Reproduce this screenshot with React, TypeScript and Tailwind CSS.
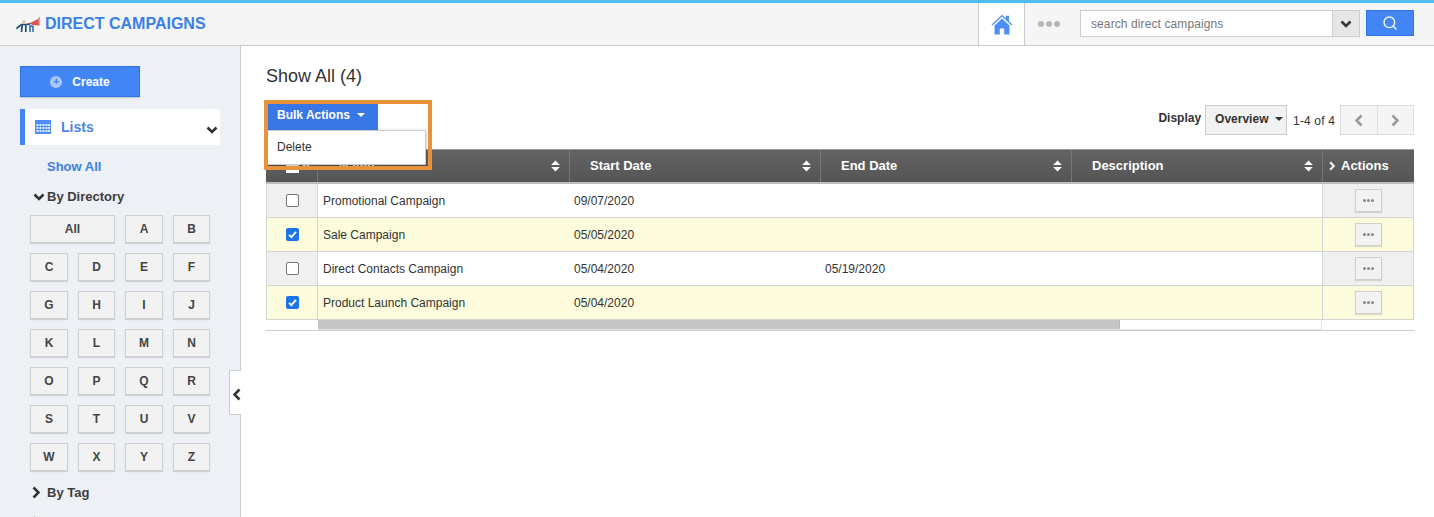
import React from 'react';
import { Search } from 'lucide-react';

const letterRows = [
  ['C', 'D', 'E', 'F'],
  ['G', 'H', 'I', 'J'],
  ['K', 'L', 'M', 'N'],
  ['O', 'P', 'Q', 'R'],
  ['S', 'T', 'U', 'V'],
  ['W', 'X', 'Y', 'Z'],
];

const campaigns = [
  { name: 'Promotional Campaign', start: '09/07/2020', end: '', checked: false },
  { name: 'Sale Campaign', start: '05/05/2020', end: '', checked: true },
  { name: 'Direct Contacts Campaign', start: '05/04/2020', end: '05/19/2020', checked: false },
  { name: 'Product Launch Campaign', start: '05/04/2020', end: '', checked: true },
];

const columns = [
  { label: 'Name', width: 'w-[252px]', pad: 'pl-[21px]' },
  { label: 'Start Date', width: 'w-[251px]', pad: 'pl-[20px]' },
  { label: 'End Date', width: 'w-[251px]', pad: 'pl-[20px]' },
  { label: 'Description', width: 'w-[251px]', pad: 'pl-[20px]' },
];

const chevronPaths = {
  down: 'M1.5 1.5 L6 6 L10.5 1.5',
  left: 'M6.5 1.5 L1.5 6.5 L6.5 11.5',
  right: 'M1.5 1.5 L6.5 6.5 L1.5 11.5',
};

const Chevron = ({ dir, color = '#333', className = '' }: { dir: 'down' | 'left' | 'right'; color?: string; className?: string }) => {
  const down = dir === 'down';
  return (
    <svg width={down ? 12 : 8} height={down ? 8 : 13} viewBox={down ? '0 0 12 8' : '0 0 8 13'} fill="none" className={`shrink-0 ${className}`}>
      <path d={chevronPaths[dir]} stroke={color} strokeWidth="2.6" />
    </svg>
  );
};

const Logo = () => (
  <svg width="24" height="15" viewBox="0 0 24 15">
    <path d="M13 6.5 L23 1.5 V8.5 L16.5 8 Z" fill="#e0524d" />
    <rect x="22.5" y="0" width="1.5" height="8.5" fill="#e89a96" />
    <circle cx="8" cy="4.6" r="1.7" fill="#e9c48c" />
    <path d="M0.5 11.5 L5.5 7.5 H10.5 L14 6.8" stroke="#1f4e79" strokeWidth="1.7" fill="none" />
    <path d="M5.5 15 L6.2 8 M9.8 15 L9.8 8" stroke="#1f4e79" strokeWidth="1.7" fill="none" />
    <path d="M14 15 V9 L17 9.5 V15" stroke="#2c6aa0" strokeWidth="1.5" fill="none" />
  </svg>
);

const HomeIcon = () => (
  <svg width="22" height="21" viewBox="0 0 22 21">
    <path d="M0.5 10.5 L11 0.8 L15 4.5 V1.8 H18 V7.2 L21.5 10.5 L20.6 11.4 L11 2.6 L1.4 11.4 Z" fill="#4d8ff7" />
    <path d="M3.5 11.5 L11 4.6 L18.5 11.5 V20.5 H13.2 V14.5 H8.8 V20.5 H3.5 Z" fill="#4d8ff7" />
  </svg>
);

const CalendarIcon = () => (
  <svg width="16" height="14" viewBox="0 0 16 14">
    <rect width="16" height="14" fill="#4d8ff7" />
    <g fill="#dfe9fb">
      {[4, 7, 10].map((y) =>
        [1.5, 4.5, 7.5, 10.5, 13].map((x) => <rect key={`${x}-${y}`} x={x} y={y} width="2" height="2" />),
      )}
    </g>
  </svg>
);

const SortIcon = () => (
  <svg width="9" height="12" viewBox="0 0 9 12" fill="#fff">
    <path d="M4.5 0.5 L8.8 5 H0.2 Z" />
    <path d="M0.2 7 H8.8 L4.5 11.5 Z" />
  </svg>
);

const Caret = ({ color }: { color: string }) => (
  <svg width="8" height="4" viewBox="0 0 8 4" fill={color}>
    <path d="M0 0 H8 L4 4 Z" />
  </svg>
);

const MoreDots = ({ color, size, gap }: { color: string; size: number; gap: string }) => (
  <span className={`flex items-center ${gap}`}>
    {[0, 1, 2].map((i) => (
      <span key={i} className="rounded-full" style={{ width: size, height: size, backgroundColor: color }} />
    ))}
  </span>
);

const LetterButton = ({ label, className }: { label: string; className: string }) => (
  <button className={`flex h-[28px] items-center justify-center border border-[#cfcfcf] bg-[#f2f2f2] pb-[1px] text-[12px] font-bold text-[#444] shadow-[0_1px_1px_rgba(0,0,0,0.12)] ${className}`}>
    {label}
  </button>
);

const Checkbox = ({ checked }: { checked: boolean }) =>
  checked ? (
    <span className="flex h-[13px] w-[13px] items-center justify-center rounded-[2px] bg-[#1a73e8]">
      <svg width="11" height="11" viewBox="0 0 11 11" fill="none">
        <path d="M2 5.8 L4.4 8.2 L9 2.8" stroke="#fff" strokeWidth="1.9" />
      </svg>
    </span>
  ) : (
    <span className="h-[13px] w-[13px] rounded-[2px] border border-[#767676] bg-white" />
  );

function Sidebar() {
  return (
    <aside className="relative w-[241px] shrink-0 border-r border-[#cccccc] bg-[#edf0f5]">
      <div className="flex flex-col pl-5 pt-[20px]">
        <button className="flex h-[31px] w-[120px] items-center justify-center gap-[10px] border border-[#2f74e8] bg-[#4285f4] text-[12px] font-bold text-white shadow-[0_1px_1px_rgba(0,0,0,0.15)]">
          <span className="flex h-[12px] w-[12px] items-center justify-center rounded-full bg-[#a9c8f9] text-[11px] leading-none text-[#4285f4]">+</span>
          Create
        </button>
        <div className="mt-3 flex h-[36px] w-[200px] border-l-[5px] border-[#4285f4] bg-white pl-[10px]">
          <div className="flex h-full flex-1 items-center gap-[10px]">
            <CalendarIcon />
            <span className="text-[14px] font-bold text-[#4a86e8]">Lists</span>
          </div>
          <Chevron dir="down" className="mr-[2px] mt-[17px]" />
        </div>
        <a className="ml-[27px] mt-[14px] text-[13px] leading-[15px] font-bold text-[#3b7fe8]">Show All</a>
        <div className="ml-[13px] mt-[15px] flex items-center gap-[2px] text-[13px] leading-[15px] font-bold text-[#3d3d3d]">
          <Chevron dir="down" />
          By Directory
        </div>
        <div className="ml-[10px] mt-[11px] flex flex-col gap-[10px]">
          <div className="flex gap-[10px]">
            <LetterButton label="All" className="w-[85px]" />
            <LetterButton label="A" className="w-[38px]" />
            <LetterButton label="B" className="w-[37px]" />
          </div>
          {letterRows.map((row) => (
            <div key={row[0]} className="flex gap-[10px]">
              {row.map((letter, i) => (
                <LetterButton key={letter} label={letter} className={i % 2 === 0 ? 'w-[38px]' : 'w-[37px]'} />
              ))}
            </div>
          ))}
        </div>
        <div className="ml-[12px] mt-[14px] flex items-center gap-[7px] text-[13px] leading-[15px] font-bold text-[#3d3d3d]">
          <Chevron dir="right" />
          By Tag
        </div>
        <Chevron dir="right" className="ml-[12px] mt-[16px]" />
      </div>
      <button className="absolute right-[-1px] top-[324px] flex h-[45px] w-[12px] items-center justify-end border border-r-0 border-[#cccccc] bg-white pt-[4px]">
        <Chevron dir="left" />
      </button>
    </aside>
  );
}

function CampaignTable() {
  return (
    <div className="mt-[11px] w-[1148px] border-b border-[#cccccc]">
      <div className="flex h-[35px] border-t border-[#999] border-b-[2px] border-b-[#bdbdbd] bg-[linear-gradient(#636363,#555555)] text-[13px] font-bold text-white">
        <div className="flex w-[52px] items-center gap-[3px] border-r border-[#777] pl-[20px]">
          <span className="h-[13px] w-[13px] shrink-0 bg-white" />
          <Chevron dir="down" color="#fff" className="h-[6px] w-[8px]" />
        </div>
        {columns.map((col) => (
          <div key={col.label} className={`flex items-center justify-between border-r border-[#777] pr-[9px] ${col.width} ${col.pad}`}>
            <span>{col.label}</span>
            <SortIcon />
          </div>
        ))}
        <div className="flex flex-1 items-center gap-[6px] pl-[6px]">
          <Chevron dir="right" color="#fff" className="h-[10px] w-[6px]" />
          Actions
        </div>
      </div>
      {campaigns.map((row) => (
        <div
          key={row.name}
          className={`flex h-[34px] items-stretch border-b border-[#d4d4d4] text-[12px] text-[#333] ${row.checked ? 'bg-[#fcfbdb]' : 'bg-white'}`}
        >
          <div className={`flex w-[52px] items-center justify-center border-x border-[#d4d4d4] ${row.checked ? '' : 'bg-[#f0f0f0]'}`}>
            <Checkbox checked={row.checked} />
          </div>
          <div className="flex w-[251px] items-center pl-[5px]">{row.name}</div>
          <div className="flex w-[251px] items-center pl-[5px]">{row.start}</div>
          <div className="flex w-[251px] items-center pl-[5px]">{row.end}</div>
          <div className="w-[251px]" />
          <div className={`flex flex-1 items-center justify-center border-x border-[#d4d4d4] ${row.checked ? '' : 'bg-[#f0f0f0]'}`}>
            <button className="flex h-[23px] w-[27px] items-center justify-center border border-[#cfcfcf] bg-[#f2f2f2] shadow-[0_1px_1px_rgba(0,0,0,0.12)]">
              <MoreDots color="#888" size={3} gap="gap-[1px]" />
            </button>
          </div>
        </div>
      ))}
      <div className="flex h-[10px]">
        <div className="w-[52px]" />
        <div className="w-[1004px] border-r border-b border-[#e5e5e5]">
          <div className="h-[9px] w-[802px] border-r border-[#b5b5b5] bg-[#c6c6c6]" />
        </div>
      </div>
    </div>
  );
}

export default function App() {
  return (
    <div className="flex h-[517px] w-[1434px] flex-col overflow-hidden bg-white font-['Liberation_Sans',Arial,sans-serif]">
      <header className="flex h-[46px] shrink-0 items-stretch border-t-[3px] border-b border-t-[#4dbdf7] border-b-[#cccccc] bg-[#f5f5f5]">
        <div className="flex flex-1 items-center gap-[5px] pl-4">
          <Logo />
          <span className="text-[16px] font-bold text-[#3b7fe8]">DIRECT CAMPAIGNS</span>
        </div>
        <div className="flex w-[47px] items-center justify-center border-x border-[#cccccc] bg-white">
          <HomeIcon />
        </div>
        <div className="ml-[13px] flex items-center">
          <MoreDots color="#b5b5b5" size={6} gap="gap-[2px]" />
        </div>
        <div className="ml-[20px] mt-[7px] flex h-[27px] w-[280px] border border-[#cccccc] bg-white">
          <span className="flex flex-1 items-center pl-[10px] text-[12px] tracking-[0.1px] text-[#777]">search direct campaigns</span>
          <span className="flex w-[27px] items-center justify-center border-l border-[#cccccc] bg-[#e6e6e6]">
            <Chevron dir="down" />
          </span>
        </div>
        <button className="ml-[6px] mr-5 mt-[7px] flex h-[26px] w-[48px] items-center justify-center border border-[#2f74e8] bg-[#4285f4]">
          <Search size={16} className="text-white" />
        </button>
      </header>
      <div className="flex min-h-0 flex-1">
        <Sidebar />
        <main className="relative min-w-0 flex-1 pl-[25px]">
          <h1 className="mt-[20px] text-[18px] leading-[20px] text-[#333]">Show All (4)</h1>
          <div className="mt-[8px] flex h-[44px] w-[1148px] items-start justify-between">
            <button className="ml-[1px] mt-[6px] flex h-[30px] w-[111px] items-center gap-[7px] bg-[#3a77e6] pl-[10px] text-[12px] font-bold text-white">
              Bulk Actions
              <Caret color="#fff" />
            </button>
            <div className="mt-[11px] flex items-center">
              <span className="mb-[4px] text-[12px] font-bold text-[#333]">Display</span>
              <span className="ml-[4px] flex h-[30px] w-[82px] items-center justify-between border border-[#cccccc] bg-[#f2f2f2] pb-[2px] pl-[9px] pr-[3px] text-[12px] font-bold text-[#333]">
                Overview
                <Caret color="#333" />
              </span>
              <span className="ml-[6px] mt-[2px] text-[12px] tracking-[0.15px] text-[#333]">1-4 of 4</span>
              <span className="ml-[5px] flex h-[30px] w-[74px] border border-[#dddddd] bg-[#f5f5f5]">
                <span className="flex flex-1 items-center justify-center border-r border-[#dddddd]">
                  <Chevron dir="left" color="#999" />
                </span>
                <span className="flex flex-1 items-center justify-center">
                  <Chevron dir="right" color="#999" />
                </span>
              </span>
            </div>
          </div>
          <CampaignTable />
          <div className="absolute left-[26px] top-[84px] h-[35px] w-[159px] rounded-[1px] border border-[#cccccc] bg-white pl-[9px] pt-[9px] text-[12px] leading-[14px] text-[#333] shadow-[0_1px_3px_rgba(0,0,0,0.3)]">
            Delete
          </div>
          <div className="pointer-events-none absolute left-[23px] top-[54px] h-[70px] w-[168px] rounded-[1px] border-[4px] border-[#e8923a]" />
        </main>
      </div>
    </div>
  );
}
